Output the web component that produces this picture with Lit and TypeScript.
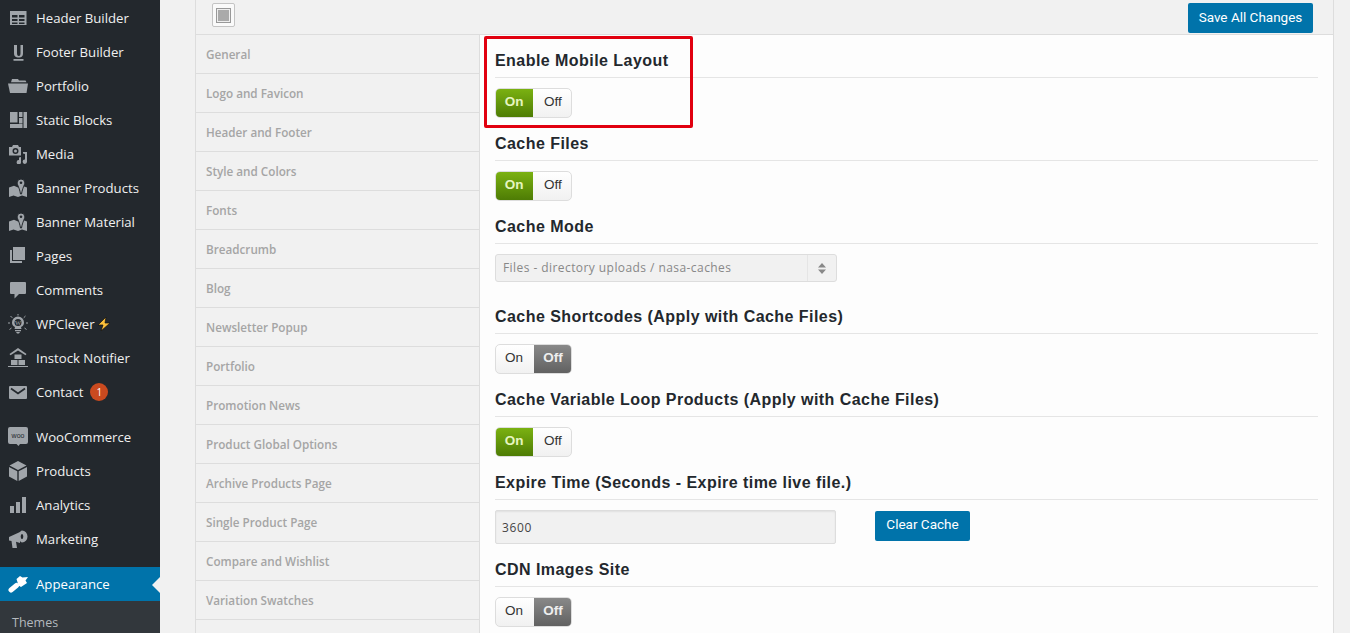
import { LitElement, html, css, svg } from "lit";
import { customElement } from "lit/decorators.js";

const ic = (body: unknown) => html`<svg class="ic" viewBox="0 0 20 20" width="20" height="20" fill="#a0a5aa">${body}</svg>`;

const icons: Record<string, unknown> = {
  table: ic(svg`<path fill-rule="evenodd" d="M2 3h16.500v14H2zM4 7v2.500h5.500V7zm7 0v2.500h5.500V7zM4 11v2h5.500v-2zm7 0v2h5.500v-2zM4 14.500V16h5.500v-1.500zm7 0V16h5.500v-1.500z"/>`),
  u: ic(svg`<path d="M6 3h3v8c0 2 .500 3 1.800 3s1.700-1 1.700-3V3H15v8c0 3.500-1.500 4.500-4.300 4.500S6 14.500 6 11zM5.500 17h10v1.800h-10z"/>`),
  folder: ic(svg`<path d="M3 6.200l1-3.200h6l1 1.600h6.500l1 1.600z"/><path d="M0 7.500h20l-1.500 9.500H2z"/>`),
  blocks: ic(svg`<path d="M2 2h7.500v10.500H2zM11 2h3.500v5H11zM15.500 2H19v16h-3.500zM11 8h3.500v5.500H11zM2 14h12.500v4H2z"/>`),
  media: ic(svg`<path fill-rule="evenodd" d="M1 3h3l1-2h5l1 2h2v8.500H1zM7.500 4a3 3 0 1 0 0 6 3 3 0 0 0 0-6z"/><circle cx="7.500" cy="7" r="1.500"/><path d="M19 8v9.500a2.200 2.200 0 1 1-2-2V10l-2-.500v-1.500zM13 13v5a2.200 2.200 0 1 1-2-2v-2.500z"/>`),
  pin: ic(svg`<path d="M1 9.500l5-1.800 4 1.800 4-1.800 5 1.800V19l-5-1.500-4 1.500-4.500-1.500L1 19z"/><path d="M13 1a3.800 3.800 0 0 1 3.800 3.800c0 2-2.300 5-3.300 11.200h-1C11.500 9.800 9.200 6.800 9.200 4.800A3.800 3.800 0 0 1 13 1z" stroke="#23282d" stroke-width="1"/><circle cx="13" cy="4.800" r="1.300" fill="#23282d"/>`),
  pages: ic(svg`<path d="M5 1h12v13H5z"/><path d="M2 4h2v11h10v2H2z"/>`),
  comment: ic(svg`<path d="M3 2h14a1 1 0 0 1 1 1v10a1 1 0 0 1-1 1h-6l-4.500 4.500V14H3a1 1 0 0 1-1-1V3a1 1 0 0 1 1-1z"/>`),
  bulb: ic(svg`<path d="M6.500 15h7l-.500-2c2-1 3-2.500 3-4.500a6 6 0 0 0-12 0c0 2 1 3.500 3 4.500zM7 16h6v1.300H7zM8 18h4l-1 1.500H9z"/><path d="M10 0v1.500M2.500 2l1.800 1.800M17.500 2l-1.800 1.800M0 9h2M18 9h2M1.500 15.500l2-1.500M18.500 15.500l-2-1.500" stroke="#a0a5aa" stroke-width="1"/><circle cx="10" cy="8.500" r="3.500" fill="#23282d"/><text x="10" y="10.800" font-size="6.500" text-anchor="middle" font-family="Liberation Serif">W</text>`),
  stock: ic(svg`<path d="M10 0l8.500 6-1 1.300L10 2.600 2.500 7.300l-1-1.300z"/><path d="M6.500 6.500h7V11h-7zM3 12h6.500v5H3zM10.500 12H17v5h-6.500zM0 18h20v1H0z"/>`),
  mail: html`<svg class="ic" viewBox="0 0 20 20" width="20" height="20"><rect x="1" y="4" width="18" height="13" rx="1" fill="#a0a5aa"/><path d="M3 6.500l7 5 7-5" fill="none" stroke="#23282d" stroke-width="1.800"/></svg>`,
  woo: html`<svg class="ic" viewBox="0 0 20 20" width="20" height="20"><path fill="#a0a5aa" d="M2 0h16a2 2 0 0 1 2 2v13a2 2 0 0 1-2 2h-6l-1.500 2-2-2H2a2 2 0 0 1-2-2V2a2 2 0 0 1 2-2z"/><text x="10" y="11" font-size="7" text-anchor="middle" fill="#23282d" font-family="Liberation Sans">woo</text></svg>`,
  box: ic(svg`<path d="M10 0l8.500 4.500L10 9 1.500 4.500zM1 6l8.300 4.300V20L1 15.500zM19 6v9.500L10.700 20v-9.700z"/>`),
  bars: ic(svg`<path d="M2 11h4v7H2zM8 7h4v11H8zM14 2h4v16h-4z"/>`),
  horn: ic(svg`<path d="M1 8l11-5v11l-4-1.200 1 6.200H4.500L3.500 12 1 11.500z"/><path fill-rule="evenodd" d="M14 1.500a5.500 6 0 0 1 0 12 3 6 0 0 1 0-12zm0 3.500a1.300 2.500 0 0 0 0 5 1.300 2.500 0 0 0 0-5z"/>`),
  brush: html`<svg class="ic" viewBox="0 0 20 20" width="20" height="20" fill="#fff"><path d="M8.500 5l3.500-3 2.500 1.500 5.500 -.500-2.500 3.500 1.500 2.500-3 2-3 2-2.500-1.500z"/><path d="M8.500 11.500l-5.500 4.500" stroke="#fff" stroke-width="5" stroke-linecap="round"/></svg>`,
};

const menu1 = [["table","Header Builder"],["u","Footer Builder"],["folder","Portfolio"],["blocks","Static Blocks"],["media","Media"],["pin","Banner Products"],["pin","Banner Material"],["pages","Pages"],["comment","Comments"],["bulb","WPClever"],["stock","Instock Notifier"],["mail","Contact"]];
const menu2 = [["woo","WooCommerce"],["box","Products"],["bars","Analytics"],["horn","Marketing"]];
const nav = ["General","Logo and Favicon","Header and Footer","Style and Colors","Fonts","Breadcrumb","Blog","Newsletter Popup","Portfolio","Promotion News","Product Global Options","Archive Products Page","Single Product Page","Compare and Wishlist","Variation Swatches"];

@customElement("app-root")
export class AppRoot extends LitElement {
  static styles = css`
    :host { display: block; height: 633px; overflow: hidden; background: #f1f1f1; font-family: "Open Sans", sans-serif; }
    .page { display: flex; height: 633px; overflow: hidden; }
    .side { width: 160px; flex: none; background: #23282d; padding-top: 1px; }
    .mi { display: flex; align-items: center; height: 34px; color: #f0f0f0; font-size: 13.200px; position: relative; }
    .ic { flex: none; margin-left: 8px; margin-right: 8px; }
    .sep { height: 11px; }
    .mi.cur { margin-top: 11px; background: #0073aa; color: #fff; }
    .mi.cur::after { content: ""; position: absolute; right: 0; top: 10px; border: 8px solid transparent; border-right-color: #f1f1f1; border-left: 0; }
    .sub { background: #32373c; height: 40px; color: #b4b9be; font-size: 12.500px; padding: 13px 0 0 12px; box-sizing: border-box; line-height: 18px; }
    .badge { margin-left: 7px; width: 18px; height: 18px; border-radius: 50%; background: #ca4a1f; color: #fff; font-size: 10px; display: flex; align-items: center; justify-content: center; }
    .bolt { margin-left: 2px; }
    .panel { margin-left: 35px; width: 1139px; flex: none; border-left: 1px solid #ddd; border-right: 1px solid #ddd; box-sizing: border-box; }
    .top { height: 35px; box-sizing: border-box; background: #f1f1f1; border-bottom: 1px solid #ddd; display: flex; align-items: flex-start; justify-content: space-between; padding: 3px 20px 0 16px; }
    .logo { width: 23px; height: 24px; box-sizing: border-box; border: 1px solid #c4c4c4; border-radius: 2px; background: #fafafa; display: flex; align-items: center; justify-content: center; }
    .logo i { display: block; width: 15px; height: 15px; box-sizing: border-box; border: 1px solid #999; background: #aaa; box-shadow: inset 0 0 0 1px #eee; }
    .btn { background: #0073aa; color: #fff; border-radius: 2px; font: 13.500px/1 Roboto, "Liberation Sans", sans-serif; display: flex; align-items: center; justify-content: center; box-sizing: border-box; }
    .save { width: 125px; height: 30px; padding-bottom: 1px; }
    .body { display: flex; }
    .nav { width: 284px; flex: none; box-sizing: border-box; background: #f1f1f1; border-right: 1px solid #ddd; }
    .nav div { height: 39px; box-sizing: border-box; border-bottom: 1px solid #ddd; padding-left: 10px; display: flex; align-items: center; font-size: 11.700px; font-weight: 600; color: #a5a5a5; }
    .main { flex: 1; background: #fdfdfd; padding: 0 15px; height: 600px; position: relative; }
    .h { height: 43px; box-sizing: border-box; border-bottom: 1px solid #e5e5e5; font: 700 16px/20px "Liberation Sans", Arial, sans-serif; letter-spacing: .45px; color: #23282d; padding-top: 16px; margin-bottom: 10px; }
    .tg { display: flex; width: 77px; height: 30px; box-sizing: border-box; border: 1px solid #ddd; border-radius: 5px; overflow: hidden; font: 13.500px/1 "Liberation Sans", Arial, sans-serif; background: linear-gradient(#fff, #f1f1f1); color: #333; }
    .tg span { flex: 1; display: flex; align-items: center; justify-content: center; padding-bottom: 2px; box-sizing: border-box; }
    .tg .l { flex: none; width: 38px; padding-right: 2px; }
    .tg .r { padding-left: 2px; }
    .tg .on { background: linear-gradient(#7cb312, #4c7a04); color: #e6f5c0; font-weight: 700; margin: -1px 0 -1px -1px; height: 30px; padding-right: 0; }
    .tg .off { background: linear-gradient(#8a8a8a, #606060); color: #eee; font-weight: 700; margin: -1px -1px -1px 0; height: 30px; }
    .sel { width: 342px; height: 28px; box-sizing: border-box; border: 1px solid #ddd; border-radius: 3px; background: #f1f1f1; display: flex; align-items: center; color: #888; font-size: 12px; padding-left: 7px; margin-bottom: 9px; letter-spacing: .43px; }
    .sel b { flex: 1; font-weight: 400; margin-top: -2px; }
    .arrow { width: 28px; height: 26px; border-left: 1px solid #e5e5e5; display: flex; align-items: center; justify-content: center; }
    .row { display: flex; align-items: flex-start; }
    .inp { width: 341px; height: 34px; box-sizing: border-box; border: 1px solid #ddd; border-radius: 2px; background: #f1f1f1; color: #444; font-size: 12px; letter-spacing: .6px; display: flex; align-items: center; padding-left: 6px; box-shadow: inset 0 1px 2px rgba(0,0,0,.07); }
    .clear { width: 95px; height: 30px; margin: 1px 0 0 39px; padding-bottom: 2px; }
    .mark { position: absolute; left: 4px; top: 1px; width: 209px; height: 92px; box-sizing: border-box; border: 3px solid #e1000f; border-radius: 2px; pointer-events: none; }
  `;

  toggle(on: boolean) {
    return html`<div class="tg">${on
      ? html`<span class="l on">On</span><span class="r">Off</span>`
      : html`<span class="l">On</span><span class="off">Off</span>`}</div>`;
  }

  mi(i: string, t: string) {
    return html`<div class="mi">${icons[i]}<span>${t}</span>${t === "WPClever"
      ? html`<svg class="bolt" width="14" height="14" viewBox="0 0 14 14"><path d="M9 0L1 8h5l-2 6 9-8H8z" fill="#fbbf3a" stroke="#111" stroke-width=".7"/></svg>`
      : t === "Contact" ? html`<span class="badge">1</span>` : ""}</div>`;
  }

  render() {
    return html`<div class="page">
      <div class="side">
        ${menu1.map(([i, t]) => this.mi(i, t))}
        <div class="sep"></div>
        ${menu2.map(([i, t]) => this.mi(i, t))}
        <div class="mi cur">${icons.brush}<span>Appearance</span></div>
        <div class="sub">Themes</div>
      </div>
      <div class="panel">
        <div class="top"><div class="logo"><i></i></div><div class="btn save">Save All Changes</div></div>
        <div class="body">
          <div class="nav">${nav.map((n) => html`<div>${n}</div>`)}</div>
          <div class="main">
            <div class="h">Enable Mobile Layout</div>${this.toggle(true)}
            <div class="h">Cache Files</div>${this.toggle(true)}
            <div class="h">Cache Mode</div>
            <div class="sel"><b>Files - directory uploads / nasa-caches</b><span class="arrow"><svg width="8" height="11" viewBox="0 0 8 11" fill="#888"><path d="M4 0l4 4.500H0zM4 11L0 6.500h8z"/></svg></span></div>
            <div class="h">Cache Shortcodes (Apply with Cache Files)</div>${this.toggle(false)}
            <div class="h">Cache Variable Loop Products (Apply with Cache Files)</div>${this.toggle(true)}
            <div class="h">Expire Time (Seconds - Expire time live file.)</div>
            <div class="row"><div class="inp">3600</div><div class="btn clear">Clear Cache</div></div>
            <div class="h">CDN Images Site</div>${this.toggle(false)}
            <div class="mark"></div>
          </div>
        </div>
      </div>
    </div>`;
  }
}
